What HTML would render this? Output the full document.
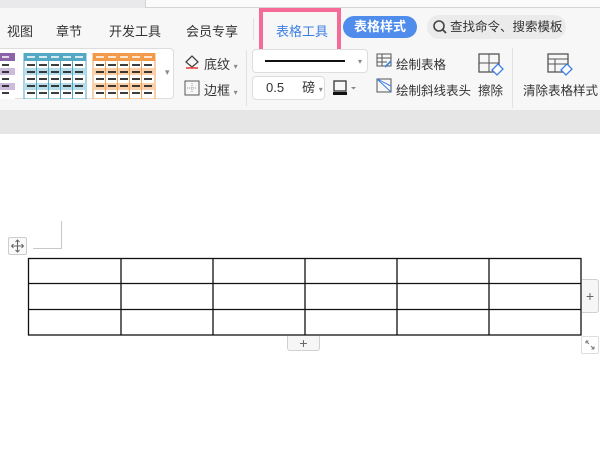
<!DOCTYPE html>
<html><head><meta charset="utf-8"><style>
*{margin:0;padding:0;box-sizing:border-box}
body{width:600px;height:450px;overflow:hidden;background:#fff;font-family:"Liberation Sans","Noto Sans CJK SC",sans-serif;position:relative;color:#333}
.a{position:absolute}
.t{font-size:13px;white-space:nowrap}
.s{font-size:12.5px}
</style></head><body>
<div class="a" style="left:0;top:0;width:600px;height:8px;background:#e9e9ec"></div>
<div class="a" style="left:145px;top:-2px;width:460px;height:10px;background:#fbfbfb;border:1px solid #d5d5d8"></div>
<div class="a" style="left:0;top:8px;width:600px;height:102px;background:#f7f7f7"></div>
<div class="a" style="left:0;top:110px;width:600px;height:24px;background:#e6e6e6"></div>
<div class="a t" style="left:7px;top:21px">视图</div>
<div class="a t" style="left:56px;top:21px">章节</div>
<div class="a t" style="left:109px;top:21px">开发工具</div>
<div class="a t" style="left:186px;top:21px">会员专享</div>
<div class="a" style="left:253px;top:18px;width:1px;height:22px;background:#e0e0e0"></div>
<div class="a t" style="left:276px;top:21px;color:#3d7fe6">表格工具</div>
<div class="a" style="left:259px;top:8px;width:82px;height:45px;border:4px solid #f56a96"></div>
<div class="a t" style="left:343px;top:16px;width:74px;height:22px;background:#4f8ceb;border-radius:11px;color:#fff;font-weight:bold;text-align:center;line-height:22px">表格样式</div>
<div class="a t s" style="left:427px;top:15px;width:139px;height:24px;background:#ebebeb;border-radius:12px;line-height:24px;padding-left:23px">查找命令、搜索模板</div>
<svg class="a" style="left:432px;top:19px" width="16" height="16"><circle cx="7" cy="7" r="5" fill="none" stroke="#444" stroke-width="1.6"/><line x1="10.5" y1="10.5" x2="14" y2="14" stroke="#444" stroke-width="1.8"/></svg>
<div class="a" style="left:-5px;top:48px;width:179px;height:51px;background:#fff;border:1px solid #ddd;border-radius:4px"></div>
<svg class="a" style="left:0;top:53px" width="160" height="46">
<g><rect x="-10" y="0" width="25" height="46" fill="#fff"/><rect x="-10" y="0" width="25" height="8" fill="#8b64a8"/><rect x="-10" y="15" width="25" height="7" fill="#cdbbdc"/><rect x="-10" y="30" width="25" height="7" fill="#cdbbdc"/></g>
<g><rect x="24" y="0" width="62" height="46" fill="#fff" stroke="#53a8c4"/><rect x="24" y="0" width="62" height="8" fill="#53a8c4"/><rect x="24" y="15" width="62" height="7" fill="#b7dcea"/><rect x="24" y="30" width="62" height="7" fill="#b7dcea"/><path d="M36.5 0v46M48.5 0v46M60.5 0v46M72.5 0v46" stroke="#53a8c4"/></g>
<g><rect x="93" y="0" width="62" height="46" fill="#fff" stroke="#f5a259"/><rect x="93" y="0" width="62" height="8" fill="#f39a48"/><rect x="93" y="15" width="62" height="7" fill="#fbd0a8"/><rect x="93" y="30" width="62" height="7" fill="#fbd0a8"/><path d="M105.5 0v46M117.5 0v46M129.5 0v46M141.5 0v46" stroke="#f5a259"/></g>
<g stroke="#222" stroke-width="1.7">
<path d="M2 12h7M2 19h7M2 26h7M2 33h7M2 40h7"/>
<path d="M27 12h8M39 12h8M51 12h8M63 12h8M75 12h8M27 19h8M39 19h8M51 19h8M63 19h8M75 19h8M27 26h8M39 26h8M51 26h8M63 26h8M75 26h8M27 33h8M39 33h8M51 33h8M63 33h8M75 33h8M27 40h8M39 40h8M51 40h8M63 40h8M75 40h8"/>
<path d="M96 12h8M108 12h8M120 12h8M132 12h8M144 12h8M96 19h8M108 19h8M120 19h8M132 19h8M144 19h8M96 26h8M108 26h8M120 26h8M132 26h8M144 26h8M96 33h8M108 33h8M120 33h8M132 33h8M144 33h8M96 40h8M108 40h8M120 40h8M132 40h8M144 40h8"/>
</g>
<g stroke="#fff" stroke-width="1.5"><path d="M27 4h8M39 4h8M51 4h8M63 4h8M75 4h8M96 4h8M108 4h8M120 4h8M132 4h8M144 4h8M2 4h7"/></g>
</svg>
<div class="a" style="left:165px;top:67px;font-size:9px;color:#888">▾</div>
<svg class="a" style="left:183px;top:53px" width="18" height="18"><path d="M3 9l6-6 6 6-6 5z" fill="none" stroke="#444" stroke-width="1.3"/><line x1="3" y1="15" x2="15" y2="15" stroke="#e33" stroke-width="1.5"/></svg>
<div class="a t" style="left:204px;top:54px">底纹 <span style="font-size:8px;color:#888">▾</span></div>
<svg class="a" style="left:183px;top:79px" width="18" height="18"><rect x="2" y="2" width="14" height="14" fill="none" stroke="#555"/><path d="M9 4v10M4 9h10" stroke="#999" stroke-dasharray="1 1"/></svg>
<div class="a t" style="left:204px;top:80px">边框 <span style="font-size:8px;color:#888">▾</span></div>
<div class="a" style="left:246px;top:50px;width:1px;height:56px;background:#e2e2e2"></div>
<div class="a" style="left:252px;top:49px;width:116px;height:24px;background:#fff;border:1px solid #ddd;border-radius:4px"></div>
<div class="a" style="left:265px;top:60px;width:80px;height:1.5px;background:#111"></div>
<div class="a" style="left:358px;top:57px;font-size:8px;color:#888">▾</div>
<div class="a t" style="left:252px;top:76px;width:73px;height:24px;background:#fff;border:1px solid #ddd;border-radius:4px;line-height:22px;padding-left:13px">0.5 &nbsp;&nbsp;&nbsp;&nbsp;磅 <span style="font-size:8px;color:#888">▾</span></div>
<svg class="a" style="left:332px;top:79px" width="26" height="18"><rect x="2" y="2" width="12" height="10" fill="none" stroke="#333" stroke-width="1.3"/><rect x="1" y="13" width="14" height="3" fill="#111"/><path d="M19 8l2.5 2.5L24 8z" fill="#888"/></svg>
<svg class="a" style="left:376px;top:53px" width="18" height="16"><rect x="1" y="1" width="14" height="12" fill="none" stroke="#555"/><path d="M1 5h14M1 9h10M6 1v12" stroke="#555"/><path d="M9 14l6-6" stroke="#3d7fe6" stroke-width="1.6"/></svg>
<div class="a t s" style="left:396px;top:54px">绘制表格</div>
<svg class="a" style="left:376px;top:78px" width="18" height="16"><rect x="1" y="1" width="14" height="13" fill="none" stroke="#555"/><path d="M1 1l14 13M1 1l14 7" stroke="#3d7fe6"/></svg>
<div class="a t s" style="left:396px;top:80px">绘制斜线表头</div>
<svg class="a" style="left:477px;top:52px" width="28" height="26"><rect x="2" y="2" width="20" height="18" fill="none" stroke="#555" stroke-width="1.3"/><path d="M12 2v18M2 11h20" stroke="#555"/><path d="M15 18l6-6 5 5-6 6z" fill="#fff" stroke="#3d7fe6" stroke-width="1.3"/></svg>
<div class="a t s" style="left:478px;top:80px">擦除</div>
<div class="a" style="left:512px;top:48px;width:1px;height:60px;background:#e2e2e2"></div>
<svg class="a" style="left:546px;top:52px" width="28" height="26"><rect x="2" y="2" width="20" height="18" fill="none" stroke="#555" stroke-width="1.3"/><path d="M2 7h20M2 12h20M9 7v13" stroke="#555"/><path d="M15 18l6-6 5 5-6 6z" fill="#fff" stroke="#3d7fe6" stroke-width="1.3"/></svg>
<div class="a t s" style="left:523px;top:80px">清除表格样式</div>
<div class="a" style="left:61px;top:221px;width:1px;height:27px;background:#c8c8c8"></div>
<div class="a" style="left:33px;top:248px;width:29px;height:1px;background:#c8c8c8"></div>
<div class="a" style="left:8px;top:237px;width:19px;height:18px;border:1px solid #ccc;border-radius:2px;background:#fafafa"></div>
<svg class="a" style="left:9px;top:238px" width="17" height="16"><path d="M8.5 2v12M2.5 8h12" stroke="#666" stroke-width="1.1"/><path d="M6.5 4l2-2 2 2M6.5 12l2 2 2-2M4.5 6l-2 2 2 2M12.5 6l2 2-2 2" fill="none" stroke="#666"/></svg>
<svg class="a" style="left:0;top:0" width="600" height="450"><g stroke="#111" stroke-width="1.3" fill="none">
<rect x="28.5" y="258.5" width="552.5" height="76.5"/>
<path d="M28.5 283.5H581M28.5 309.5H581M121 258.5V335M213 258.5V335M305 258.5V335M397 258.5V335M489 258.5V335"/></g></svg>
<div class="a" style="left:582px;top:279px;width:17px;height:34px;border:1px solid #d0d0d0;border-left:none;border-radius:0 3px 3px 0;background:#f6f6f6;text-align:center;line-height:32px;font-size:14px;color:#666">+</div>
<div class="a" style="left:287px;top:336px;width:33px;height:15px;border:1px solid #d0d0d0;border-top:none;border-radius:0 0 3px 3px;background:#f6f6f6;text-align:center;line-height:14px;font-size:14px;color:#666">+</div>
<div class="a" style="left:581px;top:336px;width:18px;height:18px;border:1px solid #ddd;border-radius:2px;background:#fff"></div>
<svg class="a" style="left:582px;top:337px" width="16" height="16"><path d="M4 4l3 3M4 4v2.5M4 4h2.5M12 12l-3-3M12 12v-2.5M12 12h-2.5" stroke="#777" fill="none"/></svg>
</body></html>
